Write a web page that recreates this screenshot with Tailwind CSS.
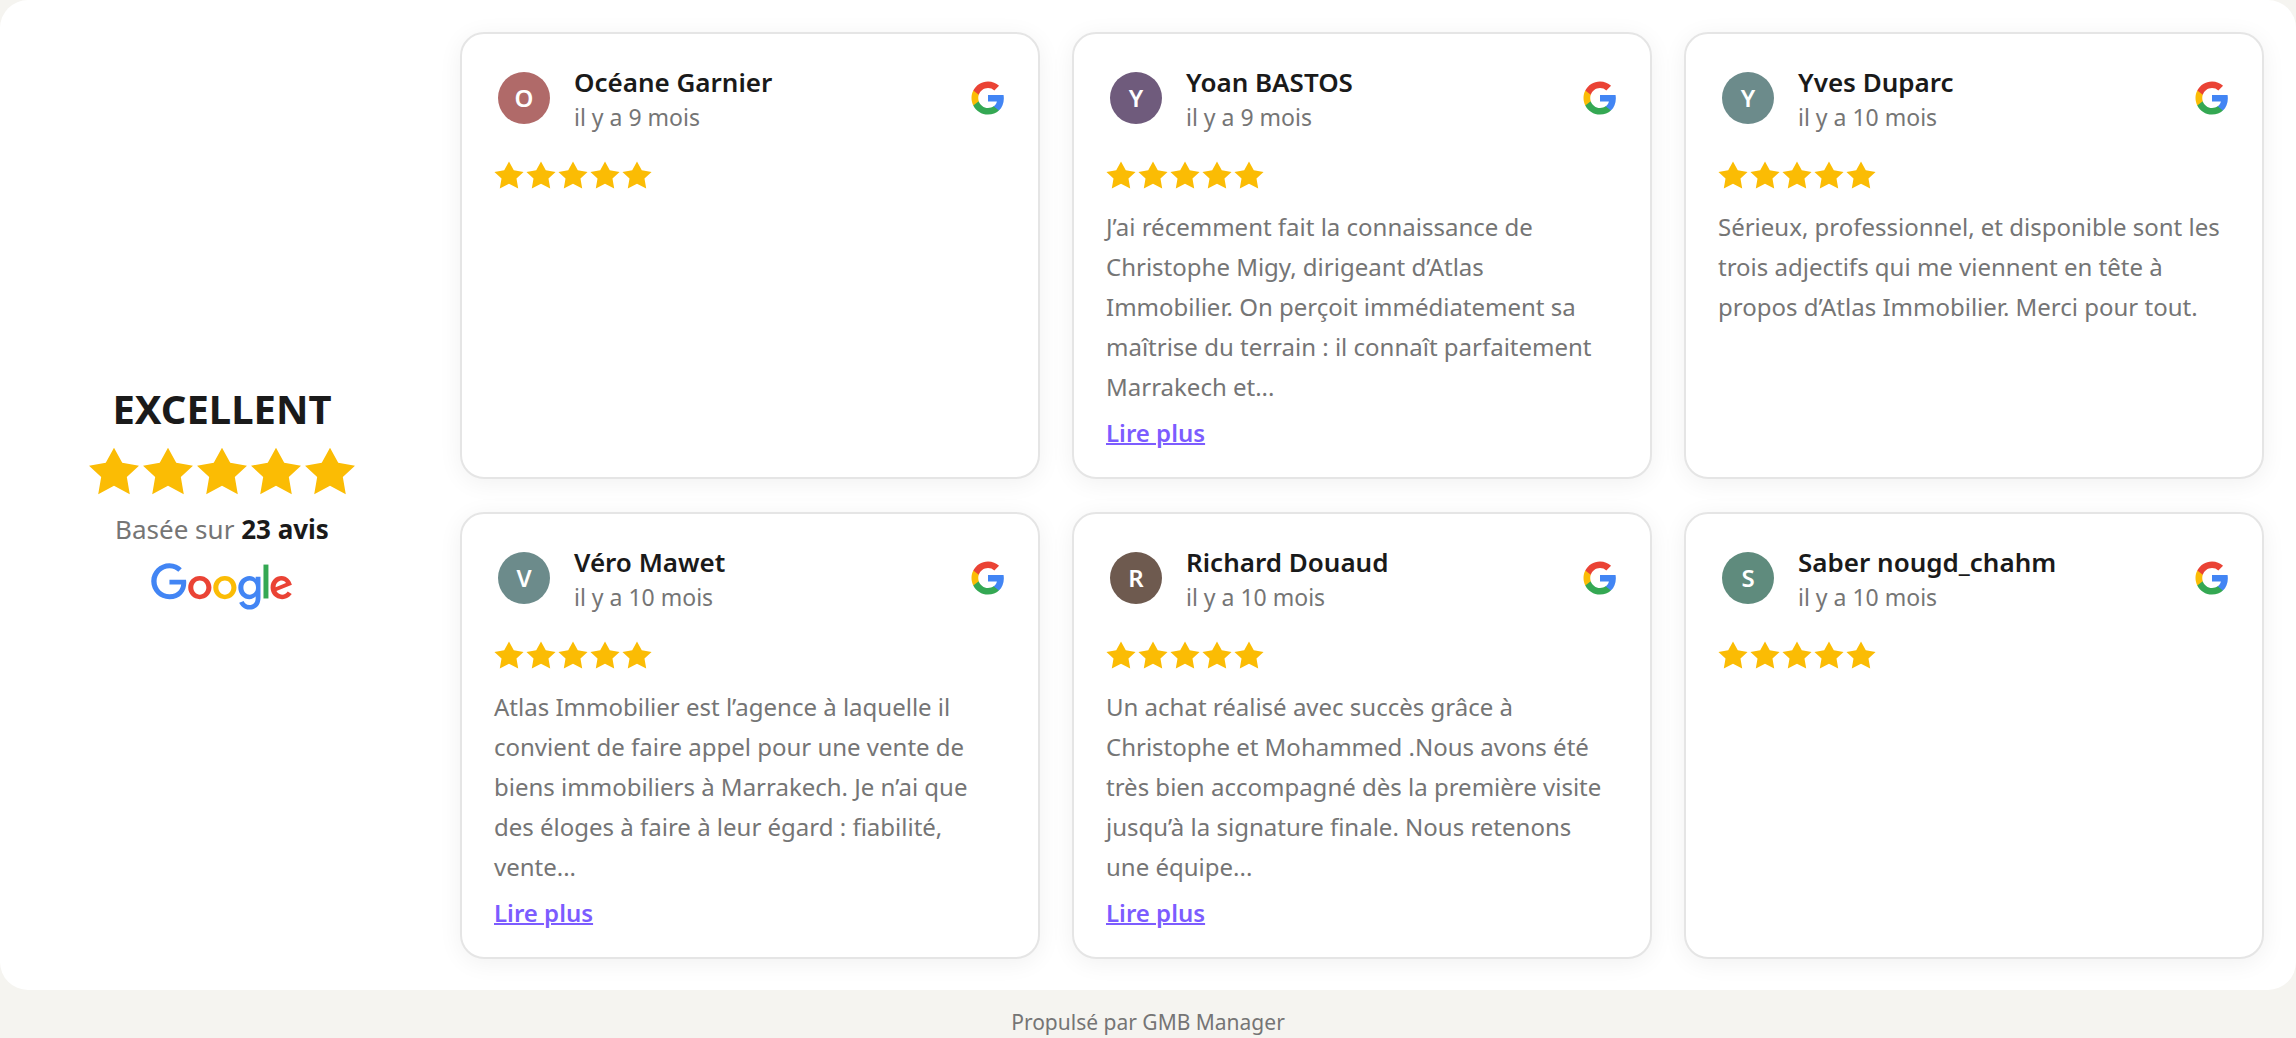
<!DOCTYPE html>
<html lang="fr">
<head>
<meta charset="utf-8">
<meta name="viewport" content="width=device-width, initial-scale=1">
<title>Avis Google</title>
<script src="https://cdn.jsdelivr.net/npm/@tailwindcss/browser@4"></script>
</head>
<body class="bg-[#f5f4f0] font-['Noto_Sans','Open_Sans',sans-serif] text-[#1a1a1a]">

<!-- Shared icons -->
<svg class="hidden" aria-hidden="true">
  <symbol id="star" viewBox="84 233 156 146">
    <path fill="#fbbc04" d="M162 235L187 281L238 290L201 324L210 377L162 351L114 377L123 324L86 290L137 281Z"/>
  </symbol>
  <symbol id="stars" viewBox="0 0 158 28">
    <use href="#star" x="0" width="30" height="28"/>
    <use href="#star" x="32" width="30" height="28"/>
    <use href="#star" x="64" width="30" height="28"/>
    <use href="#star" x="96" width="30" height="28"/>
    <use href="#star" x="128" width="30" height="28"/>
  </symbol>
  <symbol id="g" viewBox="0 0 24 24">
    <path fill="#4285f4" d="M22.56 12.25c0-.78-.07-1.53-.2-2.25H12v4.26h5.92c-.26 1.37-1.04 2.53-2.21 3.31v2.77h3.57c2.08-1.92 3.28-4.74 3.28-8.09z"/>
    <path fill="#34a853" d="M12 23c2.97 0 5.46-.98 7.28-2.66l-3.57-2.77c-.98.66-2.23 1.06-3.71 1.06-2.86 0-5.29-1.93-6.16-4.53H2.18v2.84C3.99 20.53 7.7 23 12 23z"/>
    <path fill="#fbbc05" d="M5.84 14.09c-.22-.66-.35-1.36-.35-2.09s.13-1.43.35-2.09V7.07H2.18C1.43 8.55 1 10.22 1 12s.43 3.45 1.18 4.93l3.66-2.84z"/>
    <path fill="#ea4335" d="M12 5.38c1.62 0 3.06.56 4.21 1.64l3.15-3.15C17.45 2.09 14.97 1 12 1 7.7 1 3.99 3.47 2.18 7.07l3.66 2.84c.87-2.6 3.3-4.53 6.16-4.53z"/>
  </symbol>
</svg>

<main class="flex gap-12 rounded-[28px] bg-white px-8 pt-8 pb-[31px]">

  <!-- Rating summary -->
  <aside class="flex w-[380px] shrink-0 flex-col items-center justify-center pt-1">
    <h2 class="text-[40px] leading-12 font-bold">EXCELLENT</h2>
    <div class="mt-3.5 flex gap-0.5" role="img" aria-label="5 étoiles sur 5">
      <svg class="h-12 w-13"><use href="#star"/></svg>
      <svg class="h-12 w-13"><use href="#star"/></svg>
      <svg class="h-12 w-13"><use href="#star"/></svg>
      <svg class="h-12 w-13"><use href="#star"/></svg>
      <svg class="h-12 w-13"><use href="#star"/></svg>
    </div>
    <p class="mt-3.5 text-[26px] leading-10 text-[#757575]">Basée sur <strong class="font-bold text-[#1a1a1a]">23 avis</strong></p>
    <svg class="mt-3.5 h-12 w-[142px]" viewBox="0 0 272 92" role="img" aria-label="Google">
      <path fill="#EA4335" d="M115.75 47.18c0 12.77-9.99 22.18-22.25 22.18s-22.25-9.41-22.25-22.18C71.25 34.32 81.24 25 93.5 25s22.25 9.32 22.25 22.18zm-9.74 0c0-7.98-5.79-13.44-12.51-13.44S80.99 39.2 80.99 47.18c0 7.9 5.79 13.44 12.51 13.44s12.51-5.55 12.51-13.44z"/>
      <path fill="#FBBC05" d="M163.75 47.18c0 12.77-9.99 22.18-22.25 22.18s-22.25-9.41-22.25-22.18c0-12.85 9.99-22.18 22.25-22.18s22.25 9.32 22.25 22.18zm-9.74 0c0-7.98-5.79-13.44-12.51-13.44s-12.51 5.46-12.51 13.44c0 7.9 5.79 13.44 12.51 13.44s12.51-5.55 12.51-13.44z"/>
      <path fill="#4285F4" d="M209.75 26.34v39.82c0 16.38-9.66 23.07-21.08 23.07-10.75 0-17.22-7.19-19.66-13.07l8.48-3.53c1.51 3.61 5.21 7.87 11.17 7.87 7.31 0 11.84-4.51 11.84-13v-3.19h-.34c-2.18 2.69-6.38 5.04-11.68 5.04-11.09 0-21.25-9.66-21.25-22.09 0-12.52 10.16-22.26 21.25-22.26 5.29 0 9.49 2.35 11.68 4.96h.34v-3.61h9.25zm-8.56 20.92c0-7.81-5.21-13.52-11.84-13.52-6.72 0-12.35 5.71-12.35 13.52 0 7.73 5.63 13.36 12.35 13.36 6.63 0 11.84-5.63 11.84-13.36z"/>
      <path fill="#34A853" d="M225 3v65h-9.5V3h9.5z"/>
      <path fill="#EA4335" d="M262.02 54.48l7.56 5.04c-2.44 3.61-8.32 9.83-18.48 9.83-12.6 0-22.01-9.74-22.01-22.18 0-13.19 9.49-22.18 20.92-22.18 11.51 0 17.14 9.16 18.98 14.11l1.01 2.52-29.65 12.28c2.27 4.45 5.8 6.72 10.75 6.72 4.96 0 8.4-2.44 10.92-6.14zm-23.27-7.98l19.82-8.23c-1.09-2.77-4.37-4.7-8.23-4.7-4.95 0-11.84 4.37-11.59 12.93z"/>
      <path fill="#4285F4" d="M35.29 41.41V32H67c.31 1.64.47 3.58.47 5.68 0 7.06-1.93 15.79-8.15 22.01-6.05 6.3-13.78 9.66-24.02 9.66C16.32 69.35.36 53.89.36 34.91.36 15.93 16.32.47 35.3.47c10.5 0 17.98 4.12 23.6 9.49l-6.64 6.64c-4.03-3.78-9.49-6.72-16.97-6.72-13.86 0-24.7 11.17-24.7 25.03 0 13.86 10.84 25.03 24.7 25.03 8.99 0 14.11-3.61 17.39-6.89 2.66-2.66 4.41-6.46 5.1-11.65l-22.49.01z"/>
    </svg>
  </aside>

  <!-- Reviews -->
  <section class="grid min-w-0 flex-1 grid-cols-3 gap-x-8 gap-y-[33px]">

    <article class="rounded-3xl border-2 border-[#e5e5e5] bg-white px-8 pt-8 pb-6 shadow-[0_4px_24px_rgba(0,0,0,0.06)]">
      <header class="flex items-start">
        <div class="mx-1 mt-1.5 flex size-13 shrink-0 items-center justify-center rounded-full bg-[#b06a69] text-2xl font-semibold text-white">O</div>
        <div class="ml-5 min-w-0 flex-1">
          <h3 class="text-[26px] leading-8 font-semibold">Océane Garnier</h3>
          <p class="mt-[3px] text-[23px] leading-8 text-[#757575]">il y a 9 mois</p>
        </div>
        <svg class="mt-3.5 size-9 shrink-0" role="img" aria-label="Google"><use href="#g"/></svg>
      </header>
      <svg class="mt-7 h-7 w-[158px]" role="img" aria-label="5 étoiles sur 5"><use href="#stars"/></svg>
    </article>

    <article class="rounded-3xl border-2 border-[#e5e5e5] bg-white px-8 pt-8 pb-6 shadow-[0_4px_24px_rgba(0,0,0,0.06)]">
      <header class="flex items-start">
        <div class="mx-1 mt-1.5 flex size-13 shrink-0 items-center justify-center rounded-full bg-[#6f5b7c] text-2xl font-semibold text-white">Y</div>
        <div class="ml-5 min-w-0 flex-1">
          <h3 class="text-[26px] leading-8 font-semibold">Yoan BASTOS</h3>
          <p class="mt-[3px] text-[23px] leading-8 text-[#757575]">il y a 9 mois</p>
        </div>
        <svg class="mt-3.5 size-9 shrink-0" role="img" aria-label="Google"><use href="#g"/></svg>
      </header>
      <svg class="mt-7 h-7 w-[158px]" role="img" aria-label="5 étoiles sur 5"><use href="#stars"/></svg>
      <p class="mt-[18px] pr-1.5 text-2xl leading-10 text-[#757575]">J’ai récemment fait la connaissance de Christophe Migy, dirigeant d’Atlas Immobilier. On perçoit immédiatement sa maîtrise du terrain : il connaît parfaitement Marrakech et...</p>
      <button type="button" class="mt-1.5 block text-2xl leading-10 font-semibold text-[#7c5cff] underline decoration-2">Lire plus</button>
    </article>

    <article class="rounded-3xl border-2 border-[#e5e5e5] bg-white px-8 pt-8 pb-6 shadow-[0_4px_24px_rgba(0,0,0,0.06)]">
      <header class="flex items-start">
        <div class="mx-1 mt-1.5 flex size-13 shrink-0 items-center justify-center rounded-full bg-[#6c8b8b] text-2xl font-semibold text-white">Y</div>
        <div class="ml-5 min-w-0 flex-1">
          <h3 class="text-[26px] leading-8 font-semibold">Yves Duparc</h3>
          <p class="mt-[3px] text-[23px] leading-8 text-[#757575]">il y a 10 mois</p>
        </div>
        <svg class="mt-3.5 size-9 shrink-0" role="img" aria-label="Google"><use href="#g"/></svg>
      </header>
      <svg class="mt-7 h-7 w-[158px]" role="img" aria-label="5 étoiles sur 5"><use href="#stars"/></svg>
      <p class="mt-[18px] pr-1.5 text-2xl leading-10 text-[#757575]">Sérieux, professionnel, et disponible sont les trois adjectifs qui me viennent en tête à propos d’Atlas Immobilier. Merci pour tout.</p>
    </article>

    <article class="rounded-3xl border-2 border-[#e5e5e5] bg-white px-8 pt-8 pb-6 shadow-[0_4px_24px_rgba(0,0,0,0.06)]">
      <header class="flex items-start">
        <div class="mx-1 mt-1.5 flex size-13 shrink-0 items-center justify-center rounded-full bg-[#6c8b8b] text-2xl font-semibold text-white">V</div>
        <div class="ml-5 min-w-0 flex-1">
          <h3 class="text-[26px] leading-8 font-semibold">Véro Mawet</h3>
          <p class="mt-[3px] text-[23px] leading-8 text-[#757575]">il y a 10 mois</p>
        </div>
        <svg class="mt-3.5 size-9 shrink-0" role="img" aria-label="Google"><use href="#g"/></svg>
      </header>
      <svg class="mt-7 h-7 w-[158px]" role="img" aria-label="5 étoiles sur 5"><use href="#stars"/></svg>
      <p class="mt-[18px] pr-1.5 text-2xl leading-10 text-[#757575]">Atlas Immobilier est l’agence à laquelle il convient de faire appel pour une vente de biens immobiliers à Marrakech. Je n’ai que des éloges à faire à leur égard : fiabilité, vente...</p>
      <button type="button" class="mt-1.5 block text-2xl leading-10 font-semibold text-[#7c5cff] underline decoration-2">Lire plus</button>
    </article>

    <article class="rounded-3xl border-2 border-[#e5e5e5] bg-white px-8 pt-8 pb-6 shadow-[0_4px_24px_rgba(0,0,0,0.06)]">
      <header class="flex items-start">
        <div class="mx-1 mt-1.5 flex size-13 shrink-0 items-center justify-center rounded-full bg-[#6e5a4f] text-2xl font-semibold text-white">R</div>
        <div class="ml-5 min-w-0 flex-1">
          <h3 class="text-[26px] leading-8 font-semibold">Richard Douaud</h3>
          <p class="mt-[3px] text-[23px] leading-8 text-[#757575]">il y a 10 mois</p>
        </div>
        <svg class="mt-3.5 size-9 shrink-0" role="img" aria-label="Google"><use href="#g"/></svg>
      </header>
      <svg class="mt-7 h-7 w-[158px]" role="img" aria-label="5 étoiles sur 5"><use href="#stars"/></svg>
      <p class="mt-[18px] pr-1.5 text-2xl leading-10 text-[#757575]">Un achat réalisé avec succès grâce à Christophe et Mohammed .Nous avons été très bien accompagné dès la première visite jusqu’à la signature finale. Nous retenons une équipe...</p>
      <button type="button" class="mt-1.5 block text-2xl leading-10 font-semibold text-[#7c5cff] underline decoration-2">Lire plus</button>
    </article>

    <article class="rounded-3xl border-2 border-[#e5e5e5] bg-white px-8 pt-8 pb-6 shadow-[0_4px_24px_rgba(0,0,0,0.06)]">
      <header class="flex items-start">
        <div class="mx-1 mt-1.5 flex size-13 shrink-0 items-center justify-center rounded-full bg-[#5f8b7d] text-2xl font-semibold text-white">S</div>
        <div class="ml-5 min-w-0 flex-1">
          <h3 class="text-[26px] leading-8 font-semibold">Saber nougd_chahm</h3>
          <p class="mt-[3px] text-[23px] leading-8 text-[#757575]">il y a 10 mois</p>
        </div>
        <svg class="mt-3.5 size-9 shrink-0" role="img" aria-label="Google"><use href="#g"/></svg>
      </header>
      <svg class="mt-7 h-7 w-[158px]" role="img" aria-label="5 étoiles sur 5"><use href="#stars"/></svg>
    </article>

  </section>
</main>

<footer class="pt-4 text-center text-[21px] leading-8 text-[#757575]">Propulsé par GMB Manager</footer>

</body>
</html>
